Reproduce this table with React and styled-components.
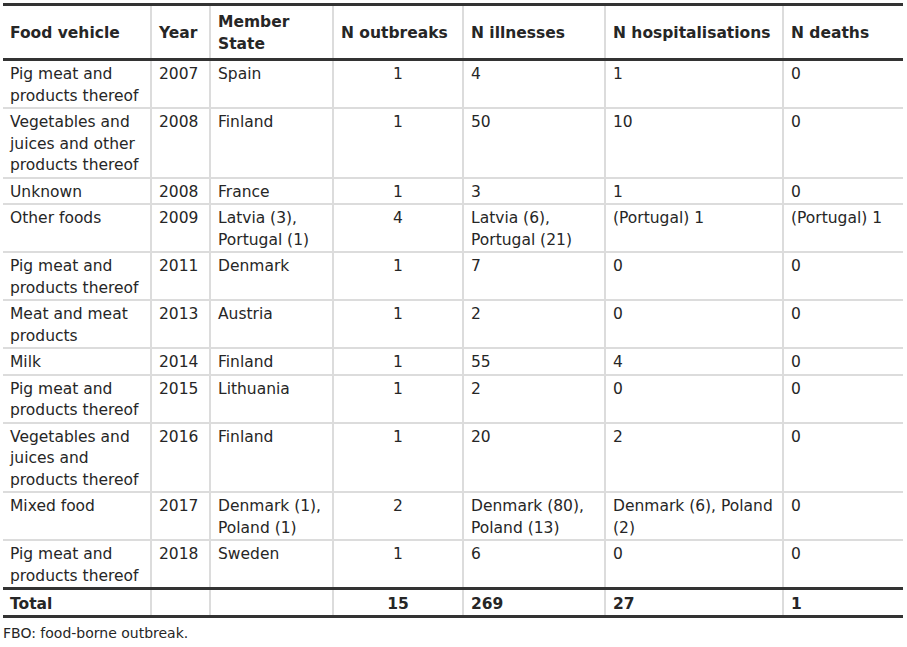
import React from "react";
import styled, { createGlobalStyle } from "styled-components";

const GlobalStyle = createGlobalStyle`
  body {
    margin: 0;
    background: #ffffff;
    font-family: "DejaVu Sans", Verdana, sans-serif;
    color: #262626;
  }
`;

const columns = [
  { title: "Food vehicle", width: 148 },
  { title: "Year", width: 59 },
  { title: "Member\nState", width: 123 },
  { title: "N outbreaks", width: 130, align: "center" },
  { title: "N illnesses", width: 142 },
  { title: "N hospitalisations", width: 178 },
  { title: "N deaths", width: 120 },
];

const rows = [
  ["Pig meat and\nproducts thereof", "2007", "Spain", "1", "4", "1", "0"],
  ["Vegetables and\njuices and other\nproducts thereof", "2008", "Finland", "1", "50", "10", "0"],
  ["Unknown", "2008", "France", "1", "3", "1", "0"],
  ["Other foods", "2009", "Latvia (3),\nPortugal (1)", "4", "Latvia (6),\nPortugal (21)", "(Portugal) 1", "(Portugal) 1"],
  ["Pig meat and\nproducts thereof", "2011", "Denmark", "1", "7", "0", "0"],
  ["Meat and meat\nproducts", "2013", "Austria", "1", "2", "0", "0"],
  ["Milk", "2014", "Finland", "1", "55", "4", "0"],
  ["Pig meat and\nproducts thereof", "2015", "Lithuania", "1", "2", "0", "0"],
  ["Vegetables and\njuices and\nproducts thereof", "2016", "Finland", "1", "20", "2", "0"],
  ["Mixed food", "2017", "Denmark (1),\nPoland (1)", "2", "Denmark (80),\nPoland (13)", "Denmark (6), Poland\n(2)", "0"],
  ["Pig meat and\nproducts thereof", "2018", "Sweden", "1", "6", "0", "0"],
];

const totals = ["Total", "", "", "15", "269", "27", "1"];

const Wrapper = styled.div`
  padding: 3px 4px 0 3px;
`;

const Table = styled.table`
  width: 900px;
  table-layout: fixed;
  border-collapse: collapse;
  font-size: 15.5px;
  border-top: 3px solid #333333;
  border-bottom: 3px solid #333333;
`;

const HeadCell = styled.th`
  padding: 5px 7px 3px;
  line-height: 22px;
  font-weight: bold;
  text-align: left;
  vertical-align: middle;
  white-space: pre;
  border-bottom: 3px solid #333333;
  border-left: 2px solid #dcdcdc;

  &:first-child {
    border-left: none;
  }
`;

const Cell = styled.td`
  padding: 3px 7px 0;
  line-height: 21.5px;
  text-align: ${(p) => p.$align || "left"};
  vertical-align: top;
  white-space: pre;
  border-top: 2px solid #dcdcdc;
  border-left: 2px solid #dcdcdc;

  &:first-child {
    border-left: none;
  }
`;

const TotalCell = styled(Cell)`
  padding-top: 4px;
  font-weight: bold;
  line-height: 21px;
  border-top: 3px solid #333333;
`;

const Footnote = styled.p`
  margin: 7px 0 0;
  font-size: 14px;
  line-height: 17px;
`;

const App = () => (
  <Wrapper>
    <GlobalStyle />
    <Table>
      <colgroup>
        {columns.map((c) => (
          <col key={c.title} style={{ width: c.width }} />
        ))}
      </colgroup>
      <thead>
        <tr>
          {columns.map((c) => (
            <HeadCell key={c.title}>{c.title}</HeadCell>
          ))}
        </tr>
      </thead>
      <tbody>
        {rows.map((row, i) => (
          <tr key={i}>
            {row.map((value, j) => (
              <Cell key={j} $align={columns[j].align}>
                {value}
              </Cell>
            ))}
          </tr>
        ))}
        <tr>
          {totals.map((value, j) => (
            <TotalCell key={j} $align={columns[j].align}>
              {value}
            </TotalCell>
          ))}
        </tr>
      </tbody>
    </Table>
    <Footnote>FBO: food-borne outbreak.</Footnote>
  </Wrapper>
);

export default App;
